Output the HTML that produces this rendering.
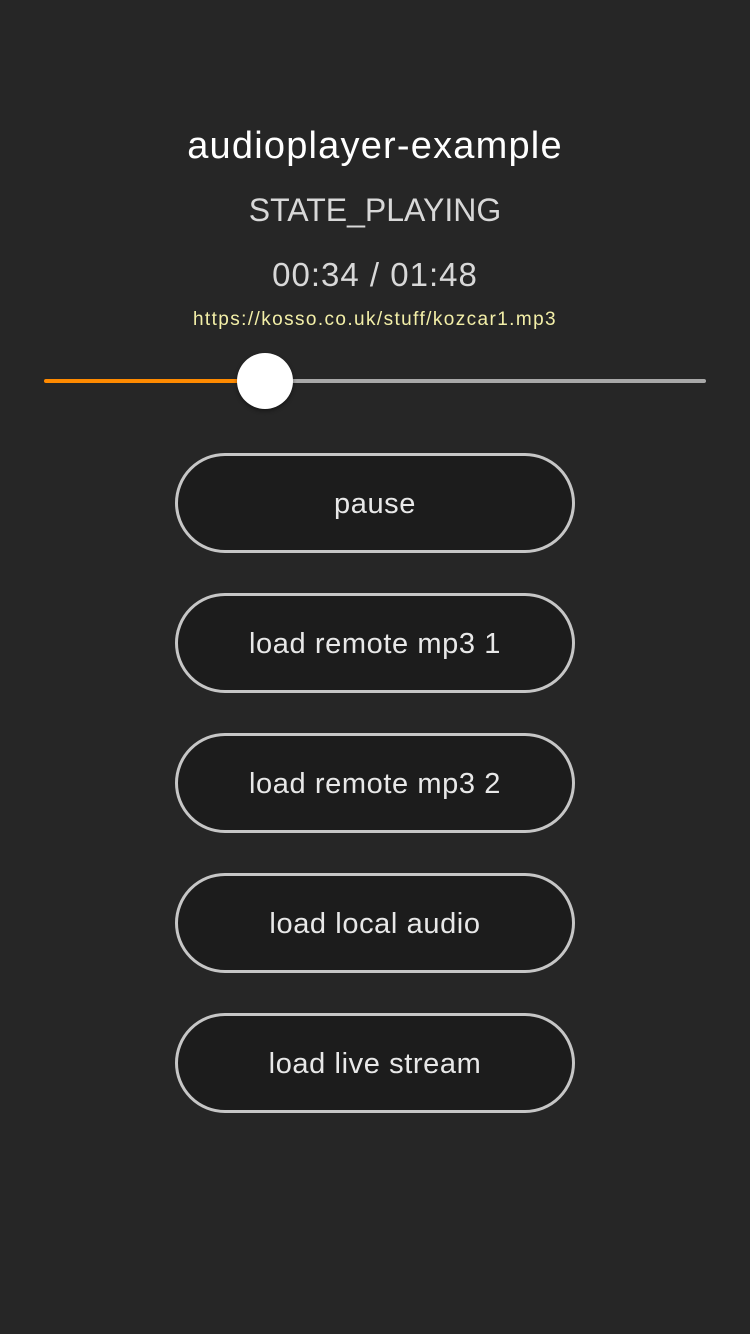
<!DOCTYPE html>
<html><head><meta charset="utf-8"><style>
body{margin:0;width:750px;height:1334px;background:#262626;font-family:"Liberation Sans",sans-serif;position:relative;overflow:hidden}
.t{position:absolute;left:0;width:750px;text-align:center;white-space:nowrap}
.btn{position:absolute;left:175px;width:394px;height:94px;border:3px solid #c6c6c6;border-radius:50px;background:#1c1c1c;color:#e8e8e8;font-size:29px;line-height:96px;text-align:center;letter-spacing:0.6px}
</style></head><body>
<div class="t" style="top:125px;font-size:38px;color:#fff;letter-spacing:1.2px">audioplayer-example</div>
<div class="t" style="top:192px;font-size:32px;color:#d8d8d8">STATE_PLAYING</div>
<div class="t" style="top:256px;font-size:33px;color:#d8d8d8;letter-spacing:1px">00:34 / 01:48</div>
<div class="t" style="top:309px;font-size:19px;color:#f3efa8;letter-spacing:1.4px">https://kosso.co.uk/stuff/kozcar1.mp3</div>
<div style="position:absolute;left:44px;top:379px;width:221px;height:4px;background:#ff8a00;border-radius:2px"></div>
<div style="position:absolute;left:265px;top:379px;width:441px;height:4px;background:#a8a8a8;border-radius:2px"></div>
<div style="position:absolute;left:237px;top:353px;width:56px;height:56px;border-radius:50%;background:#fff;box-shadow:0 2px 4px rgba(0,0,0,.4)"></div>
<div class="btn" style="top:453px">pause</div>
<div class="btn" style="top:593px">load remote mp3 1</div>
<div class="btn" style="top:733px">load remote mp3 2</div>
<div class="btn" style="top:873px">load local audio</div>
<div class="btn" style="top:1013px">load live stream</div>
</body></html>
